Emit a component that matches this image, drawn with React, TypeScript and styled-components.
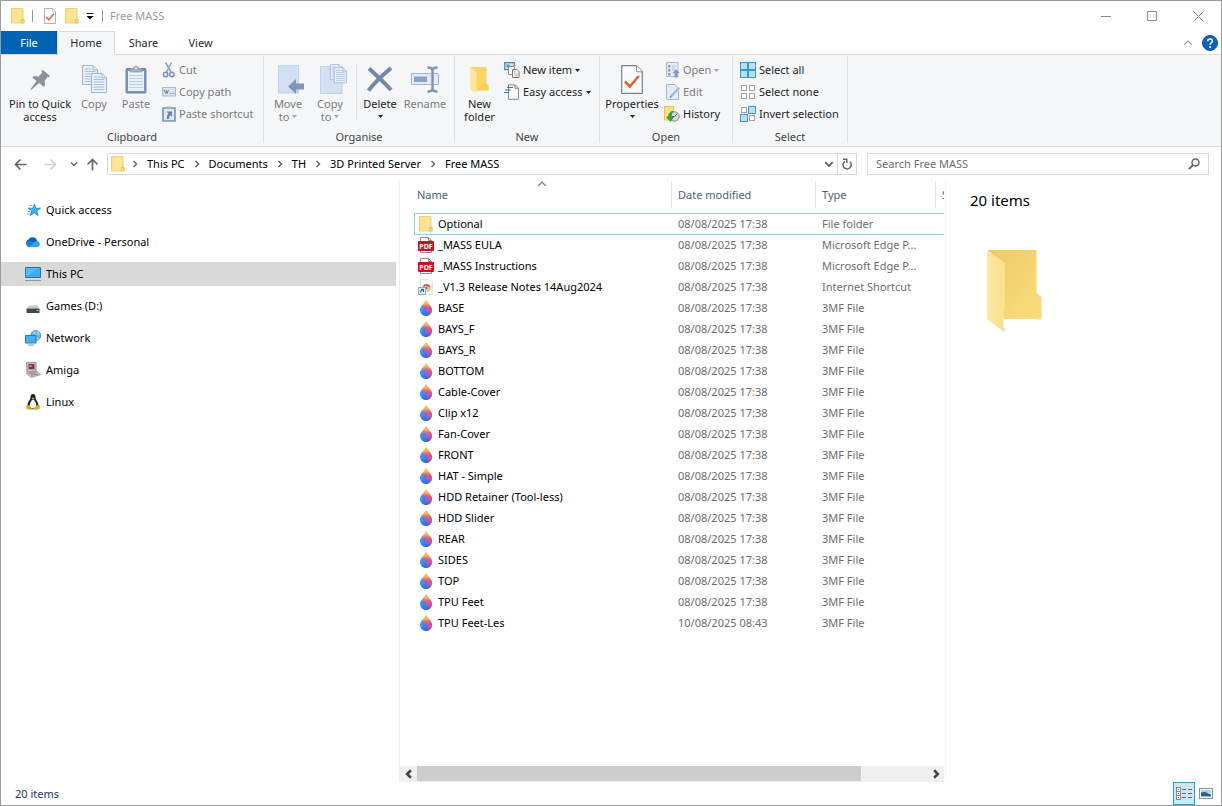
import React from "react";
import styled, { createGlobalStyle, css } from "styled-components";

const GlobalStyle = createGlobalStyle`
  * { box-sizing: border-box; }
  body { margin: 0; background: #fff; }
  body, button, input, table { font: 11px/16px "Noto Sans", "Open Sans", sans-serif; color: #111; }
  button { background: none; border: 0; padding: 0; margin: 0; }
  svg { display: block; flex: none; }
`;

/* ---------- window and title bar ---------- */

const Window = styled.div`
  display: flex;
  flex-direction: column;
  min-height: 100vh;
  border: 1px solid #9b9b9b;
  background: #fff;
`;

const TitleBar = styled.header`
  display: flex;
  align-items: center;
  height: 30px;
  padding-left: 8px;
`;

const QuickTool = styled.button<{ $width?: number }>`
  display: grid;
  place-items: center;
  width: ${(p) => p.$width ?? 18}px;
  height: 22px;
`;

const TitleRule = styled.span<{ $gap: number }>`
  width: 1px;
  height: 12px;
  margin: 0 ${(p) => p.$gap}px;
  background: #999;
`;

const WindowTitle = styled.h1`
  flex: 1;
  margin: 0;
  padding-left: 3px;
  font-size: 11px;
  font-weight: 400;
  color: #9a9a9a;
`;

const CaptionButton = styled.button`
  display: grid;
  place-items: center;
  width: 46px;
  height: 28px;
`;

/* ---------- tabs ---------- */

const TabRow = styled.nav`
  display: flex;
  align-items: flex-end;
  height: 24px;
  border-bottom: 1px solid #dadbdc;
`;

const Tab = styled.button<{ $kind?: "file" | "active" }>`
  width: 57px;
  height: 23px;
  color: #2b2b2b;
  border: 1px solid transparent;
  border-bottom: 0;
  ${(p) =>
    p.$kind === "file" &&
    css`
      width: 56px;
      background: #0163b1;
      color: #fff;
    `}
  ${(p) =>
    p.$kind === "active" &&
    css`
      width: 58px;
      height: 24px;
      margin-bottom: -1px;
      padding-bottom: 2px;
      background: #f5f6f7;
      border-color: #dadbdc;
    `}
`;

const TabTools = styled.div`
  display: flex;
  align-items: center;
  gap: 9px;
  height: 23px;
  margin-left: auto;
  padding-right: 3px;
`;

/* ---------- ribbon ---------- */

const Ribbon = styled.section`
  display: flex;
  height: 92px;
  padding-top: 1px;
  background: #f5f6f7;
  border-bottom: 1px solid #dadbdc;
`;

const Group = styled.div<{ $width: number }>`
  display: flex;
  flex-direction: column;
  width: ${(p) => p.$width}px;
  margin-bottom: 3px;
  border-right: 1px solid #e0e1e2;
`;

const GroupTools = styled.div<{ $inset?: number }>`
  display: flex;
  height: 73px;
  padding-left: ${(p) => p.$inset ?? 3}px;
`;

const GroupLabel = styled.div`
  height: 14px;
  text-align: center;
  color: #444;
`;

const BigButton = styled.button<{ $width: number }>`
  display: flex;
  flex-direction: column;
  align-items: center;
  width: ${(p) => p.$width}px;
  padding-top: 5px;
  line-height: 13px;
  white-space: nowrap;
  color: #1e1e1e;
  &:disabled { color: #7b7b7b; }
`;

const BigIcon = styled.span`
  display: grid;
  place-items: center;
  height: 36px;
`;

const BigLine = styled.span`
  display: flex;
  align-items: center;
  gap: 3px;
  height: 13px;
`;

const SmallColumn = styled.div<{ $gap?: number }>`
  display: flex;
  flex-direction: column;
  padding: 3px 0 0 ${(p) => p.$gap ?? 3}px;
`;

const SmallButton = styled.button`
  display: flex;
  align-items: center;
  gap: 3px;
  height: 22px;
  white-space: nowrap;
  color: #1e1e1e;
  &:disabled { color: #7b7b7b; }
`;

const ToolRule = styled.span`
  width: 1px;
  height: 56px;
  margin: 8px 0 0 5px;
  background: #e0e1e2;
`;

/* ---------- address row ---------- */

const AddressRow = styled.div`
  display: flex;
  align-items: center;
  height: 34px;
  padding: 0 12px 0 8px;
`;

const NavButton = styled.button<{ $width: number }>`
  display: grid;
  place-items: center;
  width: ${(p) => p.$width}px;
  height: 22px;
`;

const AddressBox = styled.div`
  display: flex;
  flex: 1;
  align-items: center;
  height: 22px;
  margin-right: 10px;
  padding-left: 3px;
  border: 1px solid #d9d9d9;
`;

const Crumbs = styled.div`
  display: flex;
  flex: 1;
  align-items: center;
  padding-left: 6px;
  gap: 8px;
`;

const Crumb = styled.a`
  color: #000;
  text-decoration: none;
`;

const AddressButton = styled.button<{ $rule?: boolean }>`
  display: grid;
  place-items: center;
  width: ${(p) => (p.$rule ? 19 : 16)}px;
  height: 20px;
  border-left: ${(p) => (p.$rule ? "1px solid #d9d9d9" : "0")};
`;

const SearchBox = styled.form`
  display: flex;
  flex: 0 0 28.5%;
  align-items: center;
  height: 22px;
  padding: 0 8px;
  border: 1px solid #d9d9d9;
`;

const SearchInput = styled.input`
  flex: 1;
  min-width: 0;
  padding: 0;
  border: 0;
  outline: 0;
  background: none;
  &::placeholder { color: #6d6d6d; opacity: 1; }
`;

/* ---------- body ---------- */

const Body = styled.main`
  display: flex;
  flex: 1;
`;

const Sidebar = styled.nav`
  display: flex;
  flex-direction: column;
  gap: 8px;
  width: 395px;
  padding-top: 17px;
`;

const Place = styled.a<{ $selected?: boolean }>`
  display: flex;
  align-items: center;
  gap: 5px;
  height: 24px;
  padding-left: 24px;
  color: #000;
  text-decoration: none;
  background: ${(p) => (p.$selected ? "#d9d9d9" : "transparent")};
`;

const ListPane = styled.section`
  display: flex;
  flex-direction: column;
  width: 546px;
  margin-left: 3px;
  border-left: 1px solid #f0f0f0;
`;

const TableArea = styled.div`
  flex: 1;
  overflow: hidden;
  margin-right: 1px;
  padding-left: 14px;
`;

const Table = styled.table`
  table-layout: fixed;
  width: 600px;
  border-spacing: 0;
`;

const HeadCell = styled.th<{ $width: number }>`
  width: ${(p) => p.$width}px;
  height: 32px;
  padding: 0;
  font-weight: 400;
  text-align: left;
  vertical-align: top;
  color: #4c607a;
`;

const HeadLabel = styled.div<{ $first?: boolean }>`
  position: relative;
  height: 27px;
  padding: 6px 0 0 ${(p) => (p.$first ? 3 : 6)}px;
  border-right: 1px solid #e5e5e5;
`;

const SortCaret = styled.span`
  position: absolute;
  top: -2px;
  left: 50%;
  margin-left: -6px;
`;

const FileRow = styled.tr<{ $focused?: boolean }>`
  ${(p) =>
    p.$focused &&
    css`
      box-shadow: inset 1px 1px #99c9e8, 0 1px #99c9e8;
    `}
`;

const Cell = styled.td`
  height: 21px;
  padding: 0 12px 0 6px;
  overflow: hidden;
  white-space: nowrap;
  color: #6d6d6d;
`;

const FileName = styled.a`
  display: flex;
  align-items: center;
  gap: 4px;
  margin-left: -2px;
  color: #000;
  text-decoration: none;
`;

const FileIcon = styled.span`
  display: grid;
  place-items: center;
  width: 16px;
`;

const ScrollBar = styled.div`
  display: flex;
  height: 16px;
  margin-right: 1px;
  background: #f0f0f0;
`;

const ScrollArrow = styled.button`
  display: grid;
  place-items: center;
  width: 17px;
  height: 16px;
`;

const ScrollTrack = styled.div`
  flex: 1;
`;

const ScrollThumb = styled.div`
  width: 87%;
  height: 15px;
  background: #cdcdcd;
`;

const Preview = styled.aside`
  flex: 1;
  padding: 8px 0 0 24px;
  border-left: 1px solid #f4f4f4;
`;

const PreviewTitle = styled.h2`
  margin: 0 0 39px;
  font-size: 15px;
  line-height: 22px;
  font-weight: 400;
  color: #000;
`;

const PreviewIcon = styled.div`
  padding-left: 17px;
`;

const StatusBar = styled.footer`
  display: flex;
  align-items: center;
  height: 23px;
  padding: 0 4px 0 14px;
  color: #1e395b;
`;

const ViewSwitch = styled.div`
  display: flex;
  margin-left: auto;
`;

const ViewButton = styled.button<{ $on?: boolean }>`
  display: grid;
  place-items: center;
  width: 22px;
  height: 23px;
  border: 1px solid ${(p) => (p.$on ? "#3e97c9" : "transparent")};
  background: ${(p) => (p.$on ? "#cce8f8" : "none")};
`;

/* ---------- icons ---------- */

const SmallFolder = () => (
  <svg width="14" height="16" viewBox="0 0 14 16">
    <path d="M.5.500h11.500v10.500h1v4H.5z" fill="#ffe594" stroke="#ecd07a" />
    <path d="M1 1h3v14H1z" fill="#fbdc7e" opacity=".4" />
    <path d="M10.500 15V11.500h2.500V15z" fill="#ffe08a" stroke="#e3bd4e" strokeWidth=".8" />
  </svg>
);

const CheckSheet = ({ w, h }: { w: number; h: number }) => (
  <svg width={w} height={h} viewBox="0 0 22 29" preserveAspectRatio="none">
    <path d="M.7.700h14.800l5.800 6v21.600H.7z" fill="#fafbfc" stroke="#7d7f83" strokeWidth="1.200" />
    <path d="M15.500.8v6h5.700" fill="#fff" stroke="#8f9195" />
    <path d="M4 16.500l4.800 5 9-10.500" fill="none" stroke="#e8602c" strokeWidth="2.600" />
  </svg>
);

type ChevronProps = { color?: string; dir?: "up" | "down" | "left" | "right"; size?: number; weight?: number };

const Chevron = ({ color = "#666", dir = "right", size = 8, weight = 1.5 }: ChevronProps) => {
  const d = { right: "M2.500 1l3 3-3 3", left: "M5.500 1l-3 3 3 3", up: "M1 5.500l3-3 3 3", down: "M1 2.500l3 3 3-3" }[dir];
  return (
    <svg width={size} height={size} viewBox="0 0 8 8">
      <path d={d} fill="none" stroke={color} strokeWidth={weight} />
    </svg>
  );
};

const Triangle = ({ color = "#222" }: { color?: string }) => (
  <svg width="5" height="3" viewBox="0 0 5 3">
    <path d="M0 0h5L2.500 3z" fill={color} />
  </svg>
);

const CustomizeIcon = () => (
  <svg width="8" height="7" viewBox="0 0 8 7">
    <path d="M.5.500h7" stroke="#222" />
    <path d="M.5 3h7L4 6.500z" fill="#000" />
  </svg>
);

const PinIcon = () => (
  <svg width="21" height="21" viewBox="0 0 21 21">
    <path d="M12.500.8l7.700 6.400-1.700 1-.9-.3-3 4.200.5 4.400-1.500 1.200-4.400-3.700L1.400 20.800l-.8-.7 6-8.200L2.300 8.500l1.300-1.400 5 .3 3.700-4-.9-1.200z" fill="#8b949c" />
  </svg>
);

const Page = ({ x, y }: { x: number; y: number }) => (
  <g transform={`translate(${x} ${y})`}>
    <path d="M.5.500h10.500l4.500 4.500v14.500H.5z" fill="#eaf1fb" stroke="#9fb5d6" />
    <path d="M11 .5v4.500h4.500" fill="none" stroke="#9fb5d6" />
    <path d="M2.500 4h7M2.500 6.500h11M2.500 9h11M2.500 11.500h11M2.500 14h11M2.500 16.500h11" stroke="#a9bfdf" />
  </g>
);

const CopyIcon = () => (
  <svg width="25" height="29" viewBox="0 0 25 29">
    <Page x={0} y={0} />
    <Page x={9} y={8} />
  </svg>
);

const PasteIcon = () => (
  <svg width="22" height="29" viewBox="0 0 22 29">
    <rect x="1" y="3.500" width="20" height="24.500" rx="1" fill="#7e93bb" stroke="#7186b0" />
    <path d="M3 6h16v20H3z" fill="#eaf1fb" />
    <path d="M4 10.500h14M4 13.500h14M4 16.500h14M4 19.500h14M4 22.500h14" stroke="#bdd0ea" />
    <path d="M5 3.500h3.500a2.500 2.500 0 015 0H17V7H5z" fill="#a8b0bd" stroke="#8a93a3" strokeWidth=".6" />
    <circle cx="11" cy="3" r="1" fill="#f5f6f7" />
  </svg>
);

const CutIcon = () => (
  <svg width="14" height="16" viewBox="0 0 14 16" fill="none">
    <path d="M3.500.5L9 10M9.500.5L4.500 10" stroke="#98a4b5" strokeWidth="1.600" />
    <circle cx="3.600" cy="12.500" r="2.200" stroke="#7b92b8" strokeWidth="1.500" />
    <circle cx="9.800" cy="12.500" r="2.200" stroke="#7b92b8" strokeWidth="1.500" />
  </svg>
);

const CopyPathIcon = () => (
  <svg width="14" height="10" viewBox="0 0 14 10">
    <path d="M.5.500h13v8.500H.5z" fill="#dbe6f5" stroke="#a7b9d6" />
    <path d="M2 3l1.500 3.500M4 3l1 3.500 1.500-3.500" fill="none" stroke="#5f7396" />
    <path d="M7.500 6.500h1M9.500 6.500h1M11.500 6.500h1" stroke="#5f7396" />
  </svg>
);

const PasteShortcutIcon = () => (
  <svg width="14" height="16" viewBox="0 0 14 16">
    <path d="M1 2h12v13H1z" fill="#dde8f6" stroke="#7b90b8" strokeWidth="1.600" />
    <path d="M4.500.5h5v2.500h-5z" fill="#a8b0bd" />
    <path d="M4.500 5.500h5.500V11L8.300 9.300C7.300 10.200 7 11.500 7 13H5c-.4-2.200.2-3.900 1.500-5.500z" fill="#6a80ab" />
  </svg>
);

const MoveToIcon = () => (
  <svg width="33" height="29" viewBox="-6 0 33 29">
    <path d="M.5.500h20v27.500H.5z" fill="#d3e0f3" stroke="#c0d1ea" />
    <path d="M18 28V19l2.500-1.500V28z" fill="#bccde8" />
    <path d="M10 21.500l8-7.500v4.500h8v6h-8V29z" fill="#8595b5" />
  </svg>
);

const CopyToIcon = () => (
  <svg width="33" height="30" viewBox="-6 0 33 30">
    <path d="M.5 2.500h21.500V29.500H.5z" fill="#d3e0f3" stroke="#c0d1ea" />
    <g transform="translate(10 0) scale(.8)">
      <Page x={0} y={0} />
      <Page x={5} y={4} />
    </g>
  </svg>
);

const DeleteIcon = () => (
  <svg width="26" height="26" viewBox="0 0 26 26">
    <path d="M2 2.500C8 8 18 17 24 24M24 2C17 8 7 17 1.500 24.500" fill="none" stroke="#7788a5" strokeWidth="4" />
  </svg>
);

const RenameIcon = () => (
  <svg width="28" height="27" viewBox="0 0 28 27">
    <path d="M.5 7.500h27v11H.5z" fill="#e3ebf7" stroke="#a5b6d2" />
    <path d="M3 10.500h13v5.500H3z" fill="#8ba0c3" />
    <path d="M16.500 1.500c3 0 5 .3 5 3v18c0 2.700-2 3-5 3M26.500 1.500c-3 0-5 .3-5 3M26.500 25.500c-3 0-5-.3-5-3" fill="none" stroke="#8192b2" strokeWidth="2.400" />
  </svg>
);

const NewFolderIcon = () => (
  <svg width="19" height="27" viewBox="0 0 19 27">
    <path d="M1 1h15.500v16l2 2v5.500H1z" fill="#fbd567" />
    <path d="M0 1l6.500 4.500V27L0 23z" fill="#fee69a" />
    <path d="M6.500 24.500L14 16l4.500 5v3.500z" fill="#f6c952" opacity=".5" />
  </svg>
);

const NewItemIcon = () => (
  <svg width="16" height="16" viewBox="0 0 16 16">
    <path d="M.7.700h9.600v7H.7z" fill="#cfe6f5" stroke="#4b86ad" strokeWidth="1.200" />
    <path d="M2.500 2.500h3v3h-3z" fill="#4f93c0" />
    <path d="M4.500 4.500h6v8h-6z" fill="#fff" stroke="#888" />
    <path d="M8.500 7.500h4.500l2 2v6H8.500z" fill="#fff" stroke="#777" />
    <path d="M10 10h2M10 12h4M10 14h4" stroke="#999" strokeWidth=".8" />
  </svg>
);

const EasyAccessIcon = () => (
  <svg width="16" height="16" viewBox="0 0 16 16">
    <path d="M4.500.800h6.500l3.500 3.500v11H4.500z" fill="#fdfdfd" stroke="#858585" />
    <path d="M11 .8v3.500h3.500" fill="none" stroke="#858585" />
    <path d="M3 3.500h6M1 6h6M0 8.500h5" stroke="#2b7aa8" strokeWidth="1.200" />
  </svg>
);

const OpenIcon = () => (
  <svg width="14" height="16" viewBox="0 0 14 16">
    <path d="M.5.500h11.500v14H.5z" fill="#e6edf8" stroke="#a9b9d4" />
    <path d="M2 3h2.500v2.500H2zM2 7h2.500v2.500H2zM2 11h2.500v2.500H2z" fill="#8ca0c4" />
    <path d="M6 4h4.500M6 6h3M6 8h3" stroke="#b3c2dc" />
    <path d="M10 7l3.500 4h-2v4.500h-3V11h-2z" fill="#8797b8" />
  </svg>
);

const EditIcon = () => (
  <svg width="14" height="16" viewBox="0 0 14 16">
    <path d="M.5.500h8.500l3.500 3.500v11.500H.5z" fill="#e3ebf7" stroke="#a9b9d4" />
    <path d="M4 13.500l1-3L12.500 3l1.500 1.500-7.500 8z" fill="#a5b9dc" />
    <path d="M3.500 14l1-2.500 1.500 1.500z" fill="#6f83aa" />
  </svg>
);

const OverflowSvg = styled.svg`
  overflow: visible;
`;

const HistoryIcon = () => (
  <OverflowSvg width="14" height="16" viewBox="2 0 14 16">
    <path d="M.5.500h9v10.500l1 1v2H.5z" fill="#fbe27c" stroke="#e3c455" />
    <circle cx="10.500" cy="10.500" r="4.700" fill="#d5d7da" stroke="#83878c" />
    <path d="M10.500 10.500l2.500-2.500M10.500 10.500H8" stroke="#555" />
    <path d="M9 5C5.500 6 4 8.500 4.500 11H2.500l4 4.500L9.500 11H7.500C7 8.500 8 7 9 5z" fill="#37a535" stroke="#238024" strokeWidth=".5" />
  </OverflowSvg>
);

const SelectIcon = ({ on }: { on: boolean[] }) => (
  <svg width="16" height="16" viewBox="0 0 16 16">
    {on.map((active, i) => {
      const x = (i % 2) * 8;
      const y = Math.floor(i / 2) * 8;
      return active ? (
        <rect key={i} x={x + 0.5} y={y + 0.5} width="7" height="7" fill="#b9e0f8" stroke="#3a97d6" />
      ) : (
        <rect key={i} x={x + 1.5} y={y + 1.5} width="5" height="5" fill="#fff" stroke="#a3a3a3" />
      );
    })}
  </svg>
);

const Arrow = ({ dir, color }: { dir: "left" | "right" | "up"; color: string }) => {
  const d = {
    left: "M12.500 6.500H1.500M6.500 1.500l-5 5 5 5",
    right: "M.5 6.500h11M6.500 1.500l5 5-5 5",
    up: "M6.500 12.500V1.500M1.500 6.500l5-5 5 5",
  }[dir];
  return (
    <svg width="13" height="13" viewBox="0 0 13 13">
      <path d={d} fill="none" stroke={color} strokeWidth="1.700" />
    </svg>
  );
};

const RefreshIcon = () => (
  <svg width="11" height="12" viewBox="0 0 11 12">
    <path d="M7.800 3.700A4.100 4.100 0 113 3.300" fill="none" stroke="#666" strokeWidth="1.500" />
    <path d="M1 1.200h3.800V5" fill="none" stroke="#666" strokeWidth="1.500" />
  </svg>
);

const SearchIcon = () => (
  <svg width="12" height="12" viewBox="0 0 12 12">
    <circle cx="7.500" cy="4.500" r="3.500" fill="none" stroke="#666" strokeWidth="1.500" />
    <path d="M5 7L.8 11.200" stroke="#666" strokeWidth="1.800" />
  </svg>
);

const HelpIcon = () => (
  <svg width="16" height="16" viewBox="0 0 16 16">
    <circle cx="8" cy="8" r="7.500" fill="#0a63bd" stroke="#0b509a" />
    <path d="M5.700 6.200c0-3 4.700-3 4.700-.3 0 1.800-2.300 1.700-2.300 3.800" fill="none" stroke="#fff" strokeWidth="1.500" />
    <circle cx="8.100" cy="11.900" r="1" fill="#fff" />
  </svg>
);

const StarIcon = () => (
  <svg width="16" height="16" viewBox="0 0 16 16">
    <path d="M9.500 2l1.300 4.200h4.700l-3.800 2.700 1.500 4.600-4-2.800-4 2.800L6.700 9 3 6.200h4.800z" fill="#3fb2f3" stroke="#1d86cf" strokeWidth=".8" />
    <path d="M4.500 3.500h3M3 9.500h2.500M2 12h3" stroke="#5fbdf2" />
  </svg>
);

const CloudIcon = () => (
  <svg width="16" height="12" viewBox="0 0 16 12">
    <path d="M4 11a4 4 0 01-.6-7.500A5 5 0 0112.300 4.500L7 10z" fill="#0a62b4" />
    <path d="M3.500 10.800A3.200 3.200 0 013.500 5c1.500-.3 3 0 6 2.500L5 11z" fill="#1582d8" />
    <path d="M4 11L9.500 6a4.500 4.500 0 013-1 3.200 3.200 0 01.5 6z" fill="#2ea6ee" />
  </svg>
);

const ComputerIcon = () => (
  <svg width="16" height="16" viewBox="0 0 16 16">
    <path d="M.5 1.500h15v10H.5z" fill="#53b9f8" stroke="#336f98" />
    <path d="M1 11L14 2h1v9z" fill="#2f9fec" opacity=".6" />
    <path d="M0 14.500h16" stroke="#8a9ba8" />
  </svg>
);

const DriveIcon = () => (
  <svg width="16" height="16" viewBox="0 0 16 16">
    <path d="M3.500 7.500h9l2 3h-13z" fill="#c7c9ca" />
    <path d="M1.500 10.500h13v4.500h-13z" fill="#444847" />
    <path d="M11.500 12.500h2" stroke="#8fe08f" />
  </svg>
);

const NetworkIcon = () => (
  <svg width="16" height="16" viewBox="0 0 16 16">
    <circle cx="10.800" cy="5.500" r="5" fill="#6fb4dc" stroke="#4b89ad" strokeWidth=".8" />
    <path d="M8 1.500l3 3-1 2 4 3M12.500 1l1.500 4" fill="none" stroke="#c2e4f5" />
    <path d="M.5 5.500h10.500v7.500H.5z" fill="#45b2f4" stroke="#2d77a8" />
    <path d="M3 15h6" stroke="#5c99c0" />
  </svg>
);

const AmigaIcon = () => (
  <svg width="16" height="16" viewBox="0 0 16 16">
    <path d="M1.500.5h9.500v9l-9 .5z" fill="#cfc5c5" stroke="#86797a" strokeWidth=".8" />
    <path d="M3.500 2h6v5.300h-6z" fill="#7d3948" />
    <path d="M4.500 3h2v2h-2z" fill="#d98d9e" />
    <path d="M1 11l11-1.500 3.500 3.200-9.500 2.800z" fill="#c9c5c4" stroke="#888" strokeWidth=".7" />
    <path d="M4 12l7-1.200M6 13.500l7-1.500" stroke="#777" strokeWidth=".8" />
  </svg>
);

const LinuxIcon = () => (
  <svg width="16" height="16" viewBox="0 0 16 16">
    <path d="M8 0c2 0 2.500 1.500 2.500 3.500 0 2 3 4.500 3 8 0 2.500-2 3.800-5.500 3.800s-5.500-1.300-5.500-3.800c0-3.500 3-6 3-8C5.500 1.500 6 0 8 0z" fill="#1f1f1f" />
    <path d="M8 5.500c1.500 0 3.300 3.200 3.300 6S9.500 14.500 8 14.500 4.700 13.500 4.700 11.500 6.500 5.500 8 5.500z" fill="#fafafa" />
    <path d="M6.500 4.200L8 3.500l1.700.7L8 5.600z" fill="#e8b820" />
    <path d="M1.300 11.500l2.700-.5 3 3.500-1 1.500-4.700-1.200zM14.700 11.500L12 11l-3 3.500 1 1.500 4.700-1.200z" fill="#d0a91e" />
  </svg>
);

const PdfIcon = () => (
  <svg width="16" height="16" viewBox="0 0 16 16">
    <path d="M2.500.500h8l3 3v12h-11z" fill="#fff" stroke="#8d8d8d" />
    <path d="M10.500.5v3h3" fill="none" stroke="#8d8d8d" />
    <rect x="0" y="4" width="16" height="10" rx="1" fill="#c8101e" />
    <text x="8" y="11.500" textAnchor="middle" fontFamily="Open Sans, sans-serif" fontSize="7" fontWeight="700" fill="#fff">PDF</text>
  </svg>
);

const ShortcutIcon = () => (
  <svg width="16" height="16" viewBox="0 0 16 16">
    <path d="M2.500.500h8.500l3.500 3.500v11.500h-12z" fill="#fbfbfb" stroke="#e3e3e3" />
    <path d="M4.500 7.500A4.200 4.200 0 0112.400 8H8.500z" fill="#d9483b" />
    <path d="M8.500 13.200A4.200 4.200 0 0012.600 8H9z" fill="#f5c23a" />
    <circle cx="8.500" cy="9" r="1.800" fill="#4a84e8" stroke="#fff" strokeWidth=".7" />
    <rect x=".5" y="8.500" width="7" height="7" fill="#f3f7fb" stroke="#8facc6" />
    <path d="M2.500 13.500c0-1.500.8-2.200 2-2.700M3 10.300h2.500V13" fill="none" stroke="#2c66a5" strokeWidth="1.200" />
  </svg>
);

const DropIcon = () => (
  <svg width="16" height="16" viewBox="0 0 16 16">
    <defs>
      <linearGradient id="dropBody" x1="0" y1="0.700" x2="1" y2="0.400">
        <stop offset="0" stopColor="#2fa4f2" />
        <stop offset=".4" stopColor="#4d7be8" />
        <stop offset=".6" stopColor="#d6539c" />
        <stop offset="1" stopColor="#c44fb4" />
      </linearGradient>
      <linearGradient id="dropTip" x1="0" y1="0" x2="0" y2="1">
        <stop offset="0" stopColor="#ffe03a" />
        <stop offset=".25" stopColor="#fbb043" />
        <stop offset=".55" stopColor="#f2607a" stopOpacity="0" />
      </linearGradient>
      <linearGradient id="dropBase" x1="0" y1="0" x2="0" y2="1">
        <stop offset=".65" stopColor="#2d6fe0" stopOpacity="0" />
        <stop offset="1" stopColor="#2a62e0" stopOpacity=".9" />
      </linearGradient>
    </defs>
    {["dropBody", "dropTip", "dropBase"].map((id) => (
      <path key={id} d="M8.200 0c.8 3 6 6 6 10a6.100 5.900 0 01-12.200 0C2 6 7.400 3 8.200 0z" fill={`url(#${id})`} />
    ))}
  </svg>
);

const LargeFolder = () => (
  <svg width="64" height="84" viewBox="0 0 64 84">
    <defs>
      <linearGradient id="folderBack" x1="0" y1="0" x2="1" y2="1">
        <stop offset="0" stopColor="#eecb68" />
        <stop offset="1" stopColor="#fbdc7c" />
      </linearGradient>
      <linearGradient id="folderFront" x1="0" y1="0" x2="1" y2="0">
        <stop offset="0" stopColor="#fde9a5" />
        <stop offset="1" stopColor="#fadf8b" />
      </linearGradient>
      <linearGradient id="folderShade" x1="0" y1="0" x2="1" y2="0">
        <stop offset="0" stopColor="#ccc" stopOpacity=".6" />
        <stop offset="1" stopColor="#ccc" stopOpacity="0" />
      </linearGradient>
    </defs>
    <path d="M16 78l6 1-6 3z" fill="url(#folderShade)" />
    <path d="M48 69h10l-5 1.500z" fill="url(#folderShade)" />
    <path d="M1 0h48.500v43l5 4v22H17z" fill="url(#folderBack)" />
    <path d="M0 0l18 13v46l-1.500 3v19.500L0 69z" fill="url(#folderFront)" />
  </svg>
);

const DetailsIcon = () => (
  <svg width="16" height="14" viewBox="0 0 16 14">
    {[0, 4, 8].map((y) => (
      <g key={y}>
        <rect x=".5" y={y + 0.5} width="4" height="4" fill="#fff" stroke="#888" />
        <rect x="2" y={y + 2} width="1" height="1" fill="#555" />
        <path d={`M6 ${y + 2.5}h4M12 ${y + 2.5}h4`} stroke="#667" />
      </g>
    ))}
  </svg>
);

const ThumbsIcon = () => (
  <svg width="14" height="11" viewBox="0 0 14 11">
    <rect x=".5" y=".5" width="13" height="10" fill="#fff" stroke="#8493a5" />
    <path d="M2 2h10v3H2z" fill="#a9d4ee" />
    <path d="M2 4.500l4-.5 6 2.500V9H2z" fill="#2d6488" />
    <path d="M2 8h10v1H2z" fill="#8db9d3" />
  </svg>
);

/* ---------- data ---------- */

const places = [
  { name: "Quick access", icon: <StarIcon /> },
  { name: "OneDrive - Personal", icon: <CloudIcon /> },
  { name: "This PC", icon: <ComputerIcon />, selected: true },
  { name: "Games (D:)", icon: <DriveIcon /> },
  { name: "Network", icon: <NetworkIcon /> },
  { name: "Amiga", icon: <AmigaIcon /> },
  { name: "Linux", icon: <LinuxIcon /> },
];

const crumbs = ["This PC", "Documents", "TH", "3D Printed Server", "Free MASS"];

const types = {
  folder: { label: "File folder", icon: <SmallFolder /> },
  pdf: { label: "Microsoft Edge P...", icon: <PdfIcon /> },
  link: { label: "Internet Shortcut", icon: <ShortcutIcon /> },
  model: { label: "3MF File", icon: <DropIcon /> },
};

type FileEntry = { name: string; type: keyof typeof types; date: string };

const stamp = "08/08/2025 17:38";

const files: FileEntry[] = [
  { name: "Optional", type: "folder", date: stamp },
  { name: "_MASS EULA", type: "pdf", date: stamp },
  { name: "_MASS Instructions", type: "pdf", date: stamp },
  { name: "_V1.3 Release Notes 14Aug2024", type: "link", date: stamp },
  ...[
    "BASE", "BAYS_F", "BAYS_R", "BOTTOM", "Cable-Cover", "Clip x12", "Fan-Cover", "FRONT",
    "HAT - Simple", "HDD Retainer (Tool-less)", "HDD Slider", "REAR", "SIDES", "TOP", "TPU Feet",
  ].map((name): FileEntry => ({ name, type: "model", date: stamp })),
  { name: "TPU Feet-Les", type: "model", date: "10/08/2025 08:43" },
];

/* ---------- ribbon parts ---------- */

type BigToolProps = { width: number; icon: React.ReactNode; lines: string[]; disabled?: boolean; menu?: boolean };

const BigTool = ({ width, icon, lines, disabled, menu }: BigToolProps) => (
  <BigButton $width={width} disabled={disabled}>
    <BigIcon>{icon}</BigIcon>
    <BigLine>{lines[0]}</BigLine>
    <BigLine>
      {lines[1]}
      {menu && <Triangle color={disabled ? "#a5a5a5" : "#222"} />}
    </BigLine>
  </BigButton>
);

type SmallToolProps = { icon: React.ReactNode; text: string; disabled?: boolean; menu?: boolean };

const SmallTool = ({ icon, text, disabled, menu }: SmallToolProps) => (
  <SmallButton disabled={disabled}>
    {icon}
    {text}
    {menu && <Triangle color={disabled ? "#a5a5a5" : "#222"} />}
  </SmallButton>
);

export default function App() {
  return (
    <Window>
      <GlobalStyle />
      <TitleBar>
        <QuickTool aria-label="Folder"><SmallFolder /></QuickTool>
        <TitleRule $gap={5} />
        <QuickTool $width={24} aria-label="Properties"><CheckSheet w={12} h={16} /></QuickTool>
        <QuickTool $width={20} aria-label="New folder"><SmallFolder /></QuickTool>
        <QuickTool $width={16} aria-label="Customise toolbar"><CustomizeIcon /></QuickTool>
        <TitleRule $gap={4} />
        <WindowTitle>Free MASS</WindowTitle>
        <CaptionButton aria-label="Minimise">
          <svg width="10" height="10" viewBox="0 0 10 10"><path d="M0 5.500h10" stroke="#888" /></svg>
        </CaptionButton>
        <CaptionButton aria-label="Maximise">
          <svg width="10" height="10" viewBox="0 0 10 10"><path d="M.5.500h9v9h-9z" fill="none" stroke="#888" /></svg>
        </CaptionButton>
        <CaptionButton aria-label="Close">
          <svg width="11" height="11" viewBox="0 0 11 11"><path d="M.5.500l10 10M10.500.500l-10 10" stroke="#888" /></svg>
        </CaptionButton>
      </TitleBar>

      <TabRow>
        <Tab $kind="file">File</Tab>
        <Tab $kind="active">Home</Tab>
        <Tab>Share</Tab>
        <Tab>View</Tab>
        <TabTools>
          <QuickTool $width={10} aria-label="Collapse ribbon"><Chevron dir="up" color="#999" size={10} weight={1} /></QuickTool>
          <QuickTool $width={16} aria-label="Help"><HelpIcon /></QuickTool>
        </TabTools>
      </TabRow>

      <Ribbon>
        <Group $width={263}>
          <GroupTools>
            <BigTool width={72} icon={<PinIcon />} lines={["Pin to Quick", "access"]} />
            <BigTool width={36} icon={<CopyIcon />} lines={["Copy"]} disabled />
            <BigTool width={48} icon={<PasteIcon />} lines={["Paste"]} disabled />
            <SmallColumn $gap={2}>
              <SmallTool icon={<CutIcon />} text="Cut" disabled />
              <SmallTool icon={<CopyPathIcon />} text="Copy path" disabled />
              <SmallTool icon={<PasteShortcutIcon />} text="Paste shortcut" disabled />
            </SmallColumn>
          </GroupTools>
          <GroupLabel>Clipboard</GroupLabel>
        </Group>

        <Group $width={191}>
          <GroupTools>
            <BigTool width={42} icon={<MoveToIcon />} lines={["Move", "to"]} disabled menu />
            <BigTool width={42} icon={<CopyToIcon />} lines={["Copy", "to"]} disabled menu />
            <ToolRule />
            <BigTool width={46} icon={<DeleteIcon />} lines={["Delete"]} menu />
            <BigTool width={44} icon={<RenameIcon />} lines={["Rename"]} disabled />
          </GroupTools>
          <GroupLabel>Organise</GroupLabel>
        </Group>

        <Group $width={145}>
          <GroupTools>
            <BigTool width={43} icon={<NewFolderIcon />} lines={["New", "folder"]} />
            <SmallColumn>
              <SmallTool icon={<NewItemIcon />} text="New item" menu />
              <SmallTool icon={<EasyAccessIcon />} text="Easy access" menu />
            </SmallColumn>
          </GroupTools>
          <GroupLabel>New</GroupLabel>
        </Group>

        <Group $width={133}>
          <GroupTools>
            <BigTool width={58} icon={<CheckSheet w={22} h={29} />} lines={["Properties"]} menu />
            <SmallColumn $gap={5}>
              <SmallTool icon={<OpenIcon />} text="Open" disabled menu />
              <SmallTool icon={<EditIcon />} text="Edit" disabled />
              <SmallTool icon={<HistoryIcon />} text="History" />
            </SmallColumn>
          </GroupTools>
          <GroupLabel>Open</GroupLabel>
        </Group>

        <Group $width={115}>
          <GroupTools $inset={4}>
            <SmallColumn>
              <SmallTool icon={<SelectIcon on={[true, true, true, true]} />} text="Select all" />
              <SmallTool icon={<SelectIcon on={[false, false, false, false]} />} text="Select none" />
              <SmallTool icon={<SelectIcon on={[false, true, true, false]} />} text="Invert selection" />
            </SmallColumn>
          </GroupTools>
          <GroupLabel>Select</GroupLabel>
        </Group>
      </Ribbon>

      <AddressRow>
        <NavButton $width={22} aria-label="Back"><Arrow dir="left" color="#666" /></NavButton>
        <NavButton $width={38} aria-label="Forward"><Arrow dir="right" color="#d0d0d0" /></NavButton>
        <NavButton $width={9} aria-label="Recent locations"><Chevron dir="down" /></NavButton>
        <NavButton $width={29} aria-label="Up"><Arrow dir="up" color="#666" /></NavButton>
        <AddressBox>
          <SmallFolder />
          <Crumbs>
            {crumbs.map((name) => (
              <React.Fragment key={name}>
                <Chevron />
                <Crumb href="#">{name}</Crumb>
              </React.Fragment>
            ))}
          </Crumbs>
          <AddressButton aria-label="Previous locations"><Chevron dir="down" size={10} /></AddressButton>
          <AddressButton $rule aria-label="Refresh"><RefreshIcon /></AddressButton>
        </AddressBox>
        <SearchBox>
          <SearchInput type="search" aria-label="Search Free MASS" placeholder="Search Free MASS" />
          <SearchIcon />
        </SearchBox>
      </AddressRow>

      <Body>
        <Sidebar>
          {places.map((p) => (
            <Place key={p.name} href="#" $selected={p.selected}>
              {p.icon}
              {p.name}
            </Place>
          ))}
        </Sidebar>

        <ListPane>
          <TableArea>
            <Table>
              <thead>
                <tr>
                  <HeadCell $width={258}>
                    <HeadLabel $first>
                      Name
                      <SortCaret><Chevron dir="up" color="#777" size={10} weight={1} /></SortCaret>
                    </HeadLabel>
                  </HeadCell>
                  <HeadCell $width={144}><HeadLabel>Date modified</HeadLabel></HeadCell>
                  <HeadCell $width={120}><HeadLabel>Type</HeadLabel></HeadCell>
                  <HeadCell $width={78}><HeadLabel>Size</HeadLabel></HeadCell>
                </tr>
              </thead>
              <tbody>
                {files.map((f, i) => (
                  <FileRow key={f.name} $focused={i === 0}>
                    <Cell>
                      <FileName href="#">
                        <FileIcon>{types[f.type].icon}</FileIcon>
                        {f.name}
                      </FileName>
                    </Cell>
                    <Cell>{f.date}</Cell>
                    <Cell>{types[f.type].label}</Cell>
                    <Cell />
                  </FileRow>
                ))}
              </tbody>
            </Table>
          </TableArea>
          <ScrollBar>
            <ScrollArrow aria-label="Scroll left"><Chevron dir="left" color="#444" size={10} weight={2} /></ScrollArrow>
            <ScrollTrack><ScrollThumb /></ScrollTrack>
            <ScrollArrow aria-label="Scroll right"><Chevron dir="right" color="#444" size={10} weight={2} /></ScrollArrow>
          </ScrollBar>
        </ListPane>

        <Preview>
          <PreviewTitle>20 items</PreviewTitle>
          <PreviewIcon><LargeFolder /></PreviewIcon>
        </Preview>
      </Body>

      <StatusBar>
        20 items
        <ViewSwitch>
          <ViewButton $on aria-label="Details view"><DetailsIcon /></ViewButton>
          <ViewButton aria-label="Large icons view"><ThumbsIcon /></ViewButton>
        </ViewSwitch>
      </StatusBar>
    </Window>
  );
}
